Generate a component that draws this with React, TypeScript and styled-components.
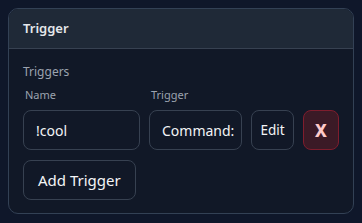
import React from "react";
import styled, { createGlobalStyle } from "styled-components";

const GlobalStyle = createGlobalStyle`
  body {
    margin: 8px;
    background: #0f172a;
    font-family: "Noto Sans", "Open Sans", sans-serif;
    color: #e5e7eb;
  }
`;

const Card = styled.section`
  border: 1px solid #334155;
  border-radius: 10px;
  background: #111827;
  overflow: hidden;
`;

const Header = styled.div`
  box-sizing: border-box;
  height: 40px;
  display: flex;
  align-items: center;
  background: #1f2937;
  border-bottom: 1px solid #374151;
  padding: 0 14px 1px;
  font-size: 13px;
  font-weight: 600;
  color: #e5e7eb;
`;

const Body = styled.div`
  padding: 15px 14px 13px;
`;

const SectionLabel = styled.div`
  font-size: 12px;
  line-height: 16px;
  color: #9ca3af;
  margin-bottom: 7px;
`;

const Row = styled.div`
  display: flex;
  align-items: flex-end;
  gap: 9px;
`;

const Field = styled.label<{ $width: number }>`
  display: flex;
  flex-direction: column;
  flex-shrink: 0;
  width: ${(p) => p.$width}px;
  font-size: 11px;
  line-height: 15px;
  color: #9ca3af;
  gap: 8px;
  span {
    padding-left: 2px;
  }
`;

const Input = styled.input`
  box-sizing: border-box;
  width: 100%;
  height: 40px;
  background: #111827;
  border: 1px solid #374151;
  border-radius: 8px;
  padding: 0 0 0 12px;
  color: #f3f4f6;
  font-family: inherit;
  font-size: 14px;
  outline: none;
`;

const Button = styled.button<{ $danger?: boolean }>`
  box-sizing: border-box;
  flex-shrink: 0;
  height: 40px;
  padding: 0;
  width: ${(p) => (p.$danger ? "36px" : "43px")};
  border-radius: 8px;
  border: 1px solid ${(p) => (p.$danger ? "#7f1d2d" : "#374151")};
  background: ${(p) => (p.$danger ? "#3b1a26" : "#111827")};
  color: ${(p) => (p.$danger ? "#fecaca" : "#f3f4f6")};
  font-family: inherit;
  font-size: ${(p) => (p.$danger ? "17px" : "13.5px")};
  font-weight: ${(p) => (p.$danger ? 800 : 400)};
`;

const AddButton = styled(Button)`
  width: auto;
  margin-top: 10px;
  padding: 0 14px;
  font-size: 15px;
`;

export default function App() {
  return (
    <>
      <GlobalStyle />
      <Card>
        <Header>Trigger</Header>
        <Body>
          <SectionLabel>Triggers</SectionLabel>
          <Row>
            <Field $width={117}>
              <span>Name</span>
              <Input defaultValue="!cool" />
            </Field>
            <Field $width={93}>
              <span>Trigger</span>
              <Input defaultValue="Command:" />
            </Field>
            <Button>Edit</Button>
            <Button $danger>X</Button>
          </Row>
          <AddButton>Add Trigger</AddButton>
        </Body>
      </Card>
    </>
  );
}
